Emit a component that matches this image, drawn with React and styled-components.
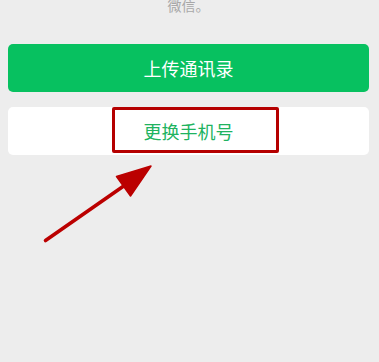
import React from 'react';
import styled, { createGlobalStyle } from 'styled-components';

const GlobalStyle = createGlobalStyle`
  html, body {
    margin: 0;
    padding: 0;
    background: #ededed;
    font-family: "Noto Sans CJK SC", "Noto Sans", sans-serif;
  }
`;

const Page = styled.div`
  position: relative;
  width: 379px;
  height: 362px;
  overflow: hidden;
  padding: 0 10px 0 8px;
  box-sizing: border-box;
`;

const Hint = styled.p`
  margin: -5px 0 0;
  text-align: center;
  font-size: 14px;
  line-height: 20px;
  color: #a8a8a8;
`;

const Actions = styled.div`
  display: flex;
  flex-direction: column;
  gap: 15px;
  margin-top: 29px;
`;

const Button = styled.div`
  position: relative;
  height: 48px;
  border-radius: 5px;
  display: flex;
  align-items: center;
  justify-content: center;
  font-size: 18px;
  background: ${(p) => (p.$primary ? '#07c160' : '#ffffff')};
  color: ${(p) => (p.$primary ? '#ffffff' : '#20b35f')};
`;

const Highlight = styled.div`
  position: absolute;
  left: 104px;
  top: 0;
  width: 167px;
  height: 46px;
  box-sizing: border-box;
  border: 3px solid #b50000;
  border-radius: 2px;
`;

const Arrow = styled.svg`
  position: absolute;
  left: 0;
  top: 0;
  pointer-events: none;
`;

export default function App() {
  return (
    <>
      <GlobalStyle />
      <Page>
        <Hint>微信。</Hint>
        <Actions>
          <Button $primary>上传通讯录</Button>
          <Button>
            更换手机号
            <Highlight />
          </Button>
        </Actions>
        <Arrow width="379" height="362" viewBox="0 0 379 362">
          <line x1="45.5" y1="240.5" x2="128" y2="183" stroke="#bb0000" strokeWidth="3.6" strokeLinecap="round" />
          <polygon points="151,166 116.5,176.5 130.5,196" fill="#bb0000" stroke="#bb0000" strokeWidth="1.5" strokeLinejoin="round" />
        </Arrow>
      </Page>
    </>
  );
}
